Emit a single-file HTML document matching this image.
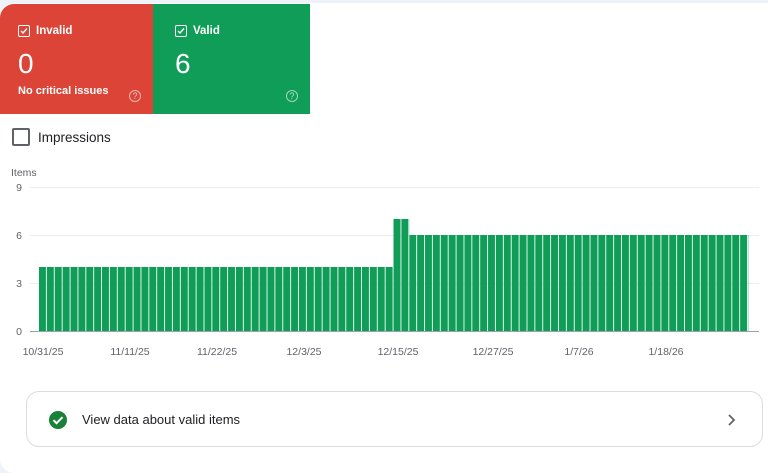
<!DOCTYPE html>
<html><head><style>
body{margin:0;width:768px;height:473px;background:#eef2f9;font-family:"Liberation Sans",sans-serif;overflow:hidden;position:relative}
.card{position:absolute;left:0;top:3px;width:768px;height:470px;background:#fff;border-radius:14px 0 0 14px;}
.red{position:absolute;left:0;top:4px;width:153px;height:110px;background:#db4437;border-top-left-radius:14px;color:#fff}
.green{position:absolute;left:153px;top:4px;width:157px;height:110px;background:#0f9d58;color:#fff}
.lbl{position:absolute;left:18px;top:21px;font-size:11.5px;font-weight:bold;display:flex;align-items:center}
.cb{width:10px;height:10px;border:1.3px solid #fff;border-radius:2px;margin-right:6px;position:relative}
.num{position:absolute;left:18px;top:44px;font-size:28px}
.sub{position:absolute;left:18px;top:81px;font-size:11px;font-weight:bold}
.q{position:absolute;right:12px;top:86px;width:10px;height:10px;border:1.3px solid rgba(255,255,255,.6);border-radius:50%;font-size:9px;line-height:10px;text-align:center;color:rgba(255,255,255,.7)}
.imp{position:absolute;left:12px;top:128px;display:flex;align-items:center;font-size:13.5px;color:#202124}
.imp .box{width:14px;height:14px;border:2px solid #5f6368;border-radius:2px;margin-right:8px}
.ax{font-size:10.5px;fill:#5f6368;font-family:"Liberation Sans",sans-serif}
.btn{position:absolute;left:26px;top:391px;width:737px;height:56px;border:1px solid #dadce0;border-radius:13px;box-sizing:border-box}
.btn span{position:absolute;left:55px;top:20px;font-size:13px;color:#202124}
</style></head><body>
<div class="card"></div>
<div class="red"><div class="lbl"><div class="cb"><svg width="10" height="10" style="position:absolute;left:0;top:0"><path d="M2 5l2 2 4-4.5" stroke="#fff" stroke-width="1.4" fill="none"/></svg></div>Invalid</div><div class="num">0</div><div class="sub">No critical issues</div><div class="q">?</div></div>
<div class="green"><div class="lbl" style="left:22px"><div class="cb"><svg width="10" height="10" style="position:absolute;left:0;top:0"><path d="M2 5l2 2 4-4.5" stroke="#fff" stroke-width="1.4" fill="none"/></svg></div>Valid</div><div class="num" style="left:22px">6</div><div class="q">?</div></div>
<div class="imp"><div class="box"></div>Impressions</div>
<svg width="768" height="473" style="position:absolute;left:0;top:0">
<defs><pattern id="p" patternUnits="userSpaceOnUse" x="39" y="0" width="7.878" height="473"><rect x="0" y="0" width="7" height="473" fill="#0f9d58"/></pattern></defs>
<text x="11" y="176" class="ax">Items</text>
<line x1="30" y1="187.5" x2="759" y2="187.5" stroke="#ececec"/>
<line x1="30" y1="235.5" x2="759" y2="235.5" stroke="#ececec"/>
<line x1="30" y1="283.5" x2="759" y2="283.5" stroke="#ececec"/>
<line x1="30" y1="331.5" x2="759" y2="331.5" stroke="#9aa0a6"/>
<text x="22" y="191" class="ax" text-anchor="end">9</text>
<text x="22" y="239" class="ax" text-anchor="end">6</text>
<text x="22" y="287" class="ax" text-anchor="end">3</text>
<text x="22" y="335" class="ax" text-anchor="end">0</text>
<rect x="39" y="267" width="354.5" height="64" fill="url(#p)"/>
<rect x="393.5" y="219" width="15.8" height="112" fill="url(#p)"/>
<rect x="409.3" y="235" width="339" height="96" fill="url(#p)"/>
<g class="ax" text-anchor="middle">
<text x="43" y="355">10/31/25</text><text x="130" y="355">11/11/25</text><text x="217" y="355">11/22/25</text><text x="304" y="355">12/3/25</text><text x="398" y="355">12/15/25</text><text x="493" y="355">12/27/25</text><text x="579" y="355">1/7/26</text><text x="666" y="355">1/18/26</text>
</g>
</svg>
<div class="btn"><svg width="20" height="20" style="position:absolute;left:21px;top:18px"><circle cx="10" cy="10" r="9" fill="#188038"/><path d="M5.5 10.2l3 3 6-6" stroke="#fff" stroke-width="2" fill="none"/></svg><span>View data about valid items</span><svg width="10" height="12" style="position:absolute;left:700px;top:22px"><path d="M2 1l5 5-5 5" stroke="#5f6368" stroke-width="1.8" fill="none"/></svg></div>
</body></html>
